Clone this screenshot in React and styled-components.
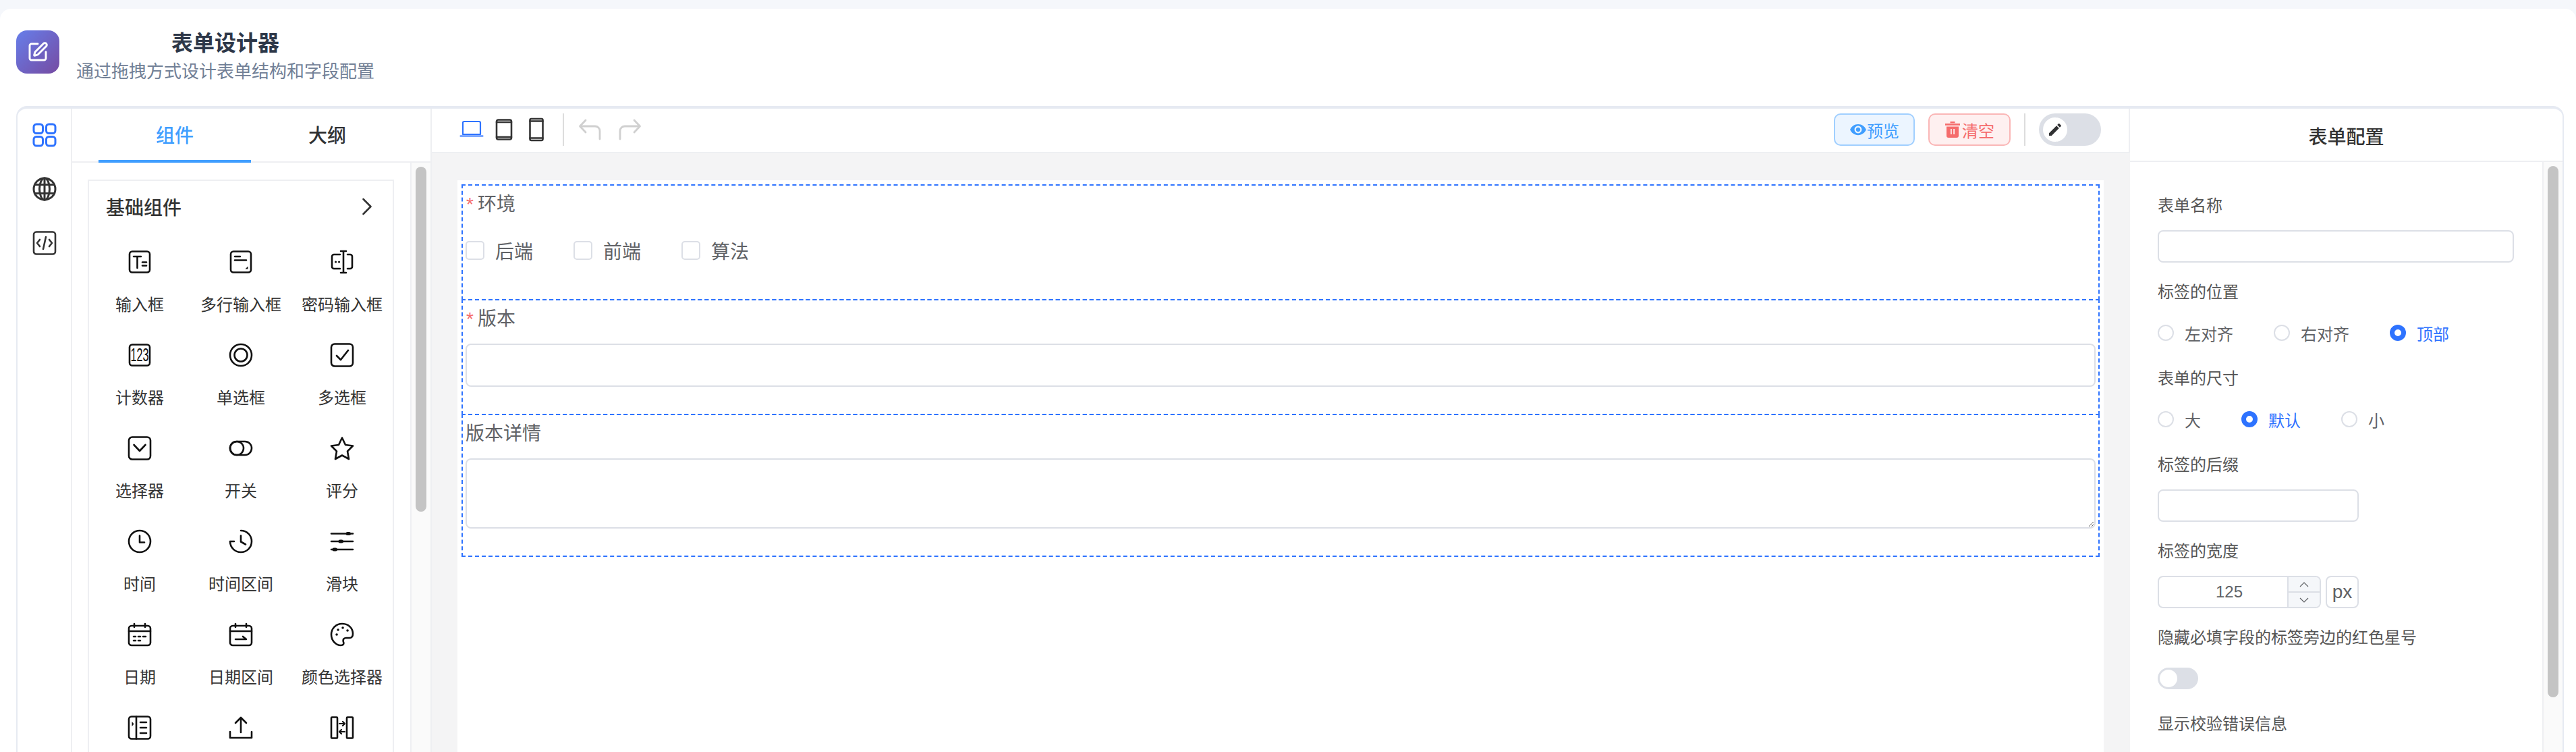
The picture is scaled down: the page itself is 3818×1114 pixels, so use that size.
import React from 'react';
import styled, { createGlobalStyle } from 'styled-components';
import { SquarePen } from 'lucide-react';
import { MdVisibility, MdEdit } from 'react-icons/md';

const blue = '#2e73ff';
const line = '#eeeff2';
const inputLine = '#dcdfe6';

const GlobalStyle = createGlobalStyle`
  html, body {
    margin: 0;
    height: 100%;
    background: #f5f7fb;
    font-family: "Liberation Sans", "Noto Sans CJK SC", sans-serif;
  }
  #root { height: 100%; }
  * { box-sizing: border-box; }
`;

const Page = styled.div`
  height: 1114px;
  overflow: hidden;
  padding-top: 13px;
`;

const Sheet = styled.div`
  height: 100%;
  background: #fff;
  border-radius: 16px 16px 0 0;
  display: flex;
  flex-direction: column;
`;

const Header = styled.header`
  height: 144px;
  flex: none;
  padding: 32px 24px 0;
  display: flex;
  gap: 25px;
`;

const Logo = styled.div`
  width: 64px;
  height: 64px;
  border-radius: 16px;
  background: linear-gradient(135deg, #667eea, #764ba2);
  color: #fff;
  display: flex;
  align-items: center;
  justify-content: center;
`;

const HeaderText = styled.div`
  text-align: center;
`;

const Title = styled.h1`
  margin: 0;
  font-size: 32px;
  line-height: 38px;
  font-weight: 700;
  color: #2d3748;
`;

const Subtitle = styled.p`
  margin: 5px 0 0;
  font-size: 26px;
  line-height: 36px;
  color: #718096;
`;

const Designer = styled.div`
  flex: 1;
  min-height: 0;
  margin: 0 18px 0 24px;
  border: 2px solid #e6eaf2;
  border-top-width: 4px;
  border-bottom: 0;
  border-radius: 16px 16px 0 0;
  display: flex;
`;

const Rail = styled.nav`
  width: 81px;
  flex: none;
  border-right: 2px solid ${line};
  padding-top: 21px;
  display: flex;
  flex-direction: column;
  align-items: center;
  gap: 44px;
`;

const Palette = styled.aside`
  width: 533px;
  flex: none;
  display: flex;
  flex-direction: column;
  border-right: 2px solid ${line};
`;

const TabBar = styled.div`
  height: 80px;
  flex: none;
  padding-left: 39px;
  display: flex;
  border-bottom: 2px solid ${line};
`;

const Tab = styled.div`
  width: 226px;
  height: 80px;
  border-bottom: 4px solid ${p => (p.$active ? '#409eff' : 'transparent')};
  color: ${p => (p.$active ? '#409eff' : '#303133')};
  font-size: 28px;
  font-weight: 500;
  display: flex;
  align-items: center;
  justify-content: center;
`;

const ScrollPane = styled.div`
  flex: 1;
  min-height: 0;
  display: flex;
  overflow: hidden;
`;

const PaletteBody = styled.div`
  flex: 1;
  padding: 25px 24px 0 23px;
`;

const Track = styled.div`
  width: 30px;
  flex: none;
  border-left: 2px solid ${line};
  background: #fafafa;
  padding: 6px 6px 0;
`;

const Thumb = styled.div`
  width: 16px;
  height: ${p => p.$height}px;
  border-radius: 8px;
  background: #c4c4c4;
`;

const Group = styled.section`
  border: 2px solid ${line};
`;

const GroupHead = styled.div`
  height: 78px;
  padding: 0 30px 2px 25px;
  display: flex;
  align-items: center;
  justify-content: space-between;
  font-size: 28px;
  font-weight: 500;
  color: #333;
`;

const WidgetGrid = styled.div`
  display: grid;
  grid-template-columns: repeat(3, 150px);
`;

const Widget = styled.div`
  height: 138px;
  padding-top: 24px;
  display: flex;
  flex-direction: column;
  align-items: center;
  color: #111;
`;

const WidgetName = styled.span`
  margin-top: 27px;
  font-size: 24px;
  line-height: 37px;
  color: #333;
  white-space: nowrap;
`;

const Center = styled.main`
  flex: 1;
  min-width: 0;
  display: flex;
  flex-direction: column;
`;

const Toolbar = styled.div`
  height: 66px;
  flex: none;
  padding: 0 41px 2px 41px;
  display: flex;
  align-items: center;
  border-bottom: 2px solid ${line};
  border-right: 2px solid ${line};
`;

const ToolGroup = styled.div`
  display: flex;
  align-items: center;
  gap: ${p => p.$gap}px;
`;

const ToolIcon = styled.div`
  width: 36px;
  height: 36px;
  color: ${p => p.$color};
`;

const VDivider = styled.div`
  width: 2px;
  height: 48px;
  background: #dddddd;
  margin: ${p => p.$margin};
`;

const ActionButton = styled.div`
  height: 48px;
  padding: 0 ${p => (p.$danger ? 22 : 21)}px;
  border-radius: 10px;
  border: 2px solid ${p => (p.$danger ? '#fab6b6' : '#a0cfff')};
  background: ${p => (p.$danger ? '#fef0f0' : '#ecf5ff')};
  color: ${p => (p.$danger ? '#f56c6c' : '#409eff')};
  font-size: 24px;
  display: flex;
  align-items: center;
  gap: ${p => (p.$danger ? 2 : 0)}px;
  margin-left: ${p => p.$left}px;
`;

const ModeSwitch = styled.div`
  width: 92px;
  height: 48px;
  border-radius: 24px;
  background: #dcdfe6;
  padding: 6px;
`;

const ModeKnob = styled.div`
  width: 36px;
  height: 36px;
  border-radius: 50%;
  background: #fff;
  color: #303133;
  display: flex;
  align-items: center;
  justify-content: center;
`;

const Spacer = styled.div`
  flex: 1;
`;

const Canvas = styled.div`
  flex: 1;
  min-height: 0;
  background: #f4f4f5;
  padding: 40px 39px 0 38px;
  display: flex;
`;

const FormSheet = styled.div`
  flex: 1;
  background: #fff;
  padding: 6px;
`;

const Field = styled.div`
  border: 2px dashed ${blue};
  padding: 4px 4px 40px;
  & + & { margin-top: -2px; }
`;

const FieldLabel = styled.div`
  height: 44px;
  margin-bottom: 16px;
  font-size: 28px;
  line-height: 47px;
  color: #606266;
  display: flex;
`;

const Star = styled.span`
  width: 11px;
  margin-left: 1px;
  margin-right: 6px;
  color: #f56c6c;
`;

const CheckRow = styled.div`
  height: 64px;
  display: flex;
  align-items: center;
  gap: 60px;
`;

const CheckItem = styled.label`
  display: flex;
  align-items: center;
  gap: 16px;
  font-size: 28px;
  color: #606266;
`;

const CheckBox = styled.span`
  width: 28px;
  height: 28px;
  border: 2px solid ${inputLine};
  border-radius: 5px;
  background: #fff;
`;

const TextInput = styled.input`
  display: block;
  width: ${p => p.$width || '100%'};
  height: ${p => p.$height}px;
  border: 2px solid ${inputLine};
  border-radius: 8px;
  background: #fff;
  outline: none;
`;

const TextArea = styled.textarea`
  display: block;
  width: 100%;
  height: 104px;
  border: 2px solid ${inputLine};
  border-radius: 8px;
  background: #fff;
  outline: none;
  resize: vertical;
`;

const Config = styled.aside`
  width: 641px;
  flex: none;
  display: flex;
  flex-direction: column;
`;

const ConfigHead = styled.div`
  height: 79px;
  flex: none;
  padding-top: 2px;
  border-bottom: 2px solid ${line};
  display: flex;
  align-items: center;
  justify-content: center;
  font-size: 28px;
  font-weight: 500;
  color: #333;
`;

const ConfigBody = styled.div`
  flex: 1;
  padding: 41px 0 0 41px;
`;

const ConfigItem = styled.div`
  margin-bottom: 20px;
`;

const ConfigLabel = styled.div`
  height: 44px;
  margin-bottom: 16px;
  font-size: 24px;
  line-height: 47px;
  color: #555;
`;

const RadioRow = styled.div`
  height: 48px;
  display: flex;
  align-items: center;
  gap: 60px;
`;

const RadioItem = styled.div`
  display: flex;
  align-items: center;
  gap: 16px;
  font-size: 24px;
  color: ${p => (p.$on ? blue : '#606266')};
`;

const RadioDot = styled.span`
  width: 24px;
  height: 24px;
  border-radius: 50%;
  border: ${p => (p.$on ? `7px solid ${blue}` : `2px solid ${inputLine}`)};
  background: #fff;
`;

const NumberRow = styled.div`
  height: 48px;
  display: flex;
  gap: 7px;
`;

const NumberBox = styled.div`
  width: 242px;
  border: 2px solid ${inputLine};
  border-radius: 8px;
  display: flex;
  overflow: hidden;
`;

const NumberValue = styled.div`
  flex: 1;
  padding-left: 18px;
  font-size: 24px;
  color: #606266;
  display: flex;
  align-items: center;
  justify-content: center;
`;

const Stepper = styled.div`
  width: 48px;
  border-left: 2px solid ${inputLine};
  background: #f5f7fa;
  display: flex;
  flex-direction: column;
`;

const StepButton = styled.div`
  flex: 1;
  color: #606266;
  display: flex;
  align-items: center;
  justify-content: center;
  & + & { border-top: 2px solid ${inputLine}; }
`;

const UnitBox = styled.div`
  width: 49px;
  border: 2px solid ${inputLine};
  border-radius: 8px;
  font-size: 28px;
  color: #606266;
  display: flex;
  align-items: center;
  justify-content: center;
`;

const Toggle = styled.div`
  width: 60px;
  height: 32px;
  border-radius: 16px;
  background: #dcdfe6;
  padding: 3px;
`;

const ToggleKnob = styled.div`
  width: 26px;
  height: 26px;
  border-radius: 50%;
  background: #fff;
`;

// all the drawn icons share a 36 box, outlined unless they say otherwise
const Glyph = ({ children, size = 36, sw = 2.6 }) => (
  <svg width={size} height={size} viewBox="0 0 36 36" fill="none" stroke="currentColor" strokeWidth={sw} strokeLinecap="round" strokeLinejoin="round">
    {children}
  </svg>
);

const widgetIcons = {
  input: <><rect x="3" y="2.5" width="30" height="31" rx="4" /><path d="M9 10h11M14.5 10v17M22 18.5h6M22 23.5h6" /></>,
  textarea: <><rect x="3" y="2.5" width="30" height="31" rx="4" /><path d="M9 10h8M9 15.500h17" /><path d="M28.500 24.500v4h-4z" fill="currentColor" stroke="none" /></>,
  password: <><path d="M15 7H6a3 3 0 0 0-3 3v15a3 3 0 0 0 3 3h9M26 7h4a3 3 0 0 1 3 3v15a3 3 0 0 1-3 3h-4M20 2v32M16 2h8M16 34h8" /><path d="M8.500 18h.1M13.500 18h.1" strokeWidth="3" /></>,
  number: <><rect x="3" y="2.5" width="30" height="31" rx="4" /><text transform="scale(0.6 1)" x="30" y="27.500" textAnchor="middle" fontSize="27" fontFamily="Liberation Sans" fill="currentColor" stroke="none">123</text></>,
  radio: <><circle cx="18" cy="18" r="16" /><circle cx="18" cy="18" r="9.500" /></>,
  checkbox: <><rect x="2" y="1.500" width="32" height="33" rx="5" /><path d="M10 19l6 6 11-14" /></>,
  select: <><rect x="2" y="1.500" width="32" height="33" rx="5" /><path d="M9.500 13L18 22l8.500-9" /></>,
  toggle: <><rect x="2" y="8" width="32" height="20" rx="10" /><circle cx="12" cy="18" r="10" /></>,
  star: <path d="M18 2.500l5 10.500 11 1.500-8 8 2 11.500-10-5.500-10 5.500 2-11.500-8-8 11-1.500z" />,
  time: <><circle cx="18" cy="18" r="16" /><path d="M18 9.500v10h7" /></>,
  timerange: <><path d="M18 2a16 16 0 1 1-16 16h6" /><path d="M18 9.500v9l7 4" /></>,
  slider: <><path d="M2 6.500h32M2 18h32M2 30h32" /><path d="M26 6.500h2.500M15 18h2.500M6 30h2.500" strokeWidth="5" /></>,
  date: <><rect x="2" y="5" width="32" height="29" rx="4" /><path d="M2 13h32M10 2v5M26 2v5M9 21h3M16 21h3M23 21h4M9 27h3M16 27h3" /></>,
  daterange: <><rect x="2" y="5" width="32" height="29" rx="4" /><path d="M2 13h32M10 2v5M26 2v5M10 25h16l-5-4" /></>,
  color: <><path d="M18 2C9 2 2 9 2 18s7 16 14 16c4 0 5-2.500 4-5-1-3 0-6 4-6h5c3 0 5-2 5-6C34 8 27 2 18 2z" /><path d="M10 18h.1M12 11h.1M19 8h.1M26 12h.1" strokeWidth="3.500" /></>,
  layout: <><rect x="2" y="1.500" width="32" height="33" rx="4" /><path d="M13 1.500v33M19 10h9M19 18h9M19 26h9" /><path d="M6.500 9l3 3.500-3 3.500z" fill="currentColor" stroke="none" /></>,
  upload: <path d="M18 25V3M10 11l8-8 8 8M2 24v9h32v-9" />,
  transfer: <><rect x="2" y="2.500" width="9" height="31" rx="1" /><rect x="25" y="2.500" width="9" height="31" rx="1" /><path d="M14 12h8M19 9l3 3-3 3M22 24h-8M17 21l-3 3 3 3" strokeWidth="2.2" /></>,
};

// the last row's names fall below the window in the picture
const widgets = [
  ['input', '输入框'], ['textarea', '多行输入框'], ['password', '密码输入框'],
  ['number', '计数器'], ['radio', '单选框'], ['checkbox', '多选框'],
  ['select', '选择器'], ['toggle', '开关'], ['star', '评分'],
  ['time', '时间'], ['timerange', '时间区间'], ['slider', '滑块'],
  ['date', '日期'], ['daterange', '日期区间'], ['color', '颜色选择器'],
  ['layout'], ['upload'], ['transfer'],
];

const RadioGroup = ({ options, value }) => (
  <RadioRow>
    {options.map(option => (
      <RadioItem key={option} $on={option === value}>
        <RadioDot $on={option === value} />
        {option}
      </RadioItem>
    ))}
  </RadioRow>
);

const TrashIcon = () => (
  <svg width="24" height="24" viewBox="0 0 24 24" fill="currentColor">
    <path d="M8.500 0h7v2.200h-7zM1 3h22v2.800H1z" />
    <path fillRule="evenodd" d="M3 7.500h18V21a3 3 0 0 1-3 3H6a3 3 0 0 1-3-3zM9 11v8h1.800v-8zM13.200 11v8H15v-8z" />
  </svg>
);

const App = () => (
  <Page>
    <GlobalStyle />
    <Sheet>
      <Header>
        <Logo><SquarePen size={32} strokeWidth={2.2} /></Logo>
        <HeaderText>
          <Title>表单设计器</Title>
          <Subtitle>通过拖拽方式设计表单结构和字段配置</Subtitle>
        </HeaderText>
      </Header>

      <Designer>
        <Rail>
          <ToolIcon $color={blue}>
            <Glyph sw={3}>
              <rect x="2" y="2" width="13.500" height="13.500" rx="4" />
              <rect x="20.500" y="2" width="13.500" height="13.500" rx="4" />
              <rect x="2" y="20.500" width="13.500" height="13.500" rx="4" />
              <rect x="20.500" y="20.500" width="13.500" height="13.500" rx="4" />
            </Glyph>
          </ToolIcon>
          <ToolIcon $color="#333">
            <Glyph sw={3}>
              <circle cx="18" cy="18" r="16" />
              <ellipse cx="18" cy="18" rx="7.500" ry="16" />
              <path d="M18 2v32M3.500 11.500h29M3.500 24.500h29" />
            </Glyph>
          </ToolIcon>
          <ToolIcon $color="#333">
            <Glyph sw={2.6}>
              <rect x="2" y="1.500" width="32" height="33" rx="4" />
              <path d="M11 13l-4 5 4 5M25 13l4 5-4 5M20 9l-4 18" />
            </Glyph>
          </ToolIcon>
        </Rail>

        <Palette>
          <TabBar>
            <Tab $active>组件</Tab>
            <Tab>大纲</Tab>
          </TabBar>
          <ScrollPane>
            <PaletteBody>
              <Group>
                <GroupHead>
                  基础组件
                  <svg width="16" height="26" viewBox="0 0 16 26" fill="none" stroke="#333" strokeWidth="2.6" strokeLinecap="round" strokeLinejoin="round"><path d="M2.500 2l11 11-11 11" /></svg>
                </GroupHead>
                <WidgetGrid>
                  {widgets.map(([icon, name]) => (
                    <Widget key={icon}>
                      <Glyph>{widgetIcons[icon]}</Glyph>
                      {name && <WidgetName>{name}</WidgetName>}
                    </Widget>
                  ))}
                </WidgetGrid>
              </Group>
            </PaletteBody>
            <Track><Thumb $height={511} /></Track>
          </ScrollPane>
        </Palette>

        <Center>
          <Toolbar>
            <ToolGroup $gap={12}>
              <ToolIcon $color={blue}>
                <Glyph sw={2.2}><path d="M5 8a2 2 0 0 1 2-2h22a2 2 0 0 1 2 2v17H5zM1.500 27.500h33" /></Glyph>
              </ToolIcon>
              <ToolIcon $color="#333">
                <Glyph sw={2.6}><rect x="7" y="3.500" width="22" height="29" rx="2.500" /><path d="M7 7h22M7 29h22" /></Glyph>
              </ToolIcon>
              <ToolIcon $color="#333">
                <Glyph sw={2.6}><rect x="8.500" y="2" width="19" height="32" rx="2" /><path d="M8.500 5.500h19M8.500 30.500h19" /></Glyph>
              </ToolIcon>
            </ToolGroup>
            <VDivider $margin="0 20px 0 21px" />
            <ToolGroup $gap={24}>
              <ToolIcon $color="#d0d0d0">
                <Glyph sw={2.8}><path d="M33 32V20a7 7 0 0 0-7-7H4M12 4L3.500 13l8.500 9" /></Glyph>
              </ToolIcon>
              <ToolIcon $color="#d0d0d0">
                <Glyph sw={2.8}><path d="M3 32V20a7 7 0 0 1 7-7h22M24 4l8.500 9-8.500 9" /></Glyph>
              </ToolIcon>
            </ToolGroup>
            <Spacer />
            <ActionButton $left={0}><MdVisibility size={26} />预览</ActionButton>
            <ActionButton $danger $left={20}><TrashIcon />清空</ActionButton>
            <VDivider $margin="0 20px" />
            <ModeSwitch>
              <ModeKnob><MdEdit size={24} /></ModeKnob>
            </ModeSwitch>
          </Toolbar>

          <Canvas>
            <FormSheet>
              <Field>
                <FieldLabel><Star>*</Star>环境</FieldLabel>
                <CheckRow>
                  {['后端', '前端', '算法'].map(option => (
                    <CheckItem key={option}><CheckBox />{option}</CheckItem>
                  ))}
                </CheckRow>
              </Field>
              <Field>
                <FieldLabel><Star>*</Star>版本</FieldLabel>
                <TextInput $height={64} />
              </Field>
              <Field>
                <FieldLabel>版本详情</FieldLabel>
                <TextArea />
              </Field>
            </FormSheet>
          </Canvas>
        </Center>

        <Config>
          <ConfigHead>表单配置</ConfigHead>
          <ScrollPane>
            <ConfigBody>
              <ConfigItem>
                <ConfigLabel>表单名称</ConfigLabel>
                <TextInput $height={48} $width="528px" />
              </ConfigItem>
              <ConfigItem>
                <ConfigLabel>标签的位置</ConfigLabel>
                <RadioGroup options={['左对齐', '右对齐', '顶部']} value="顶部" />
              </ConfigItem>
              <ConfigItem>
                <ConfigLabel>表单的尺寸</ConfigLabel>
                <RadioGroup options={['大', '默认', '小']} value="默认" />
              </ConfigItem>
              <ConfigItem>
                <ConfigLabel>标签的后缀</ConfigLabel>
                <TextInput $height={48} $width="298px" />
              </ConfigItem>
              <ConfigItem>
                <ConfigLabel>标签的宽度</ConfigLabel>
                <NumberRow>
                  <NumberBox>
                    <NumberValue>125</NumberValue>
                    <Stepper>
                      <StepButton><svg width="14" height="8" viewBox="0 0 14 8" fill="none" stroke="currentColor" strokeWidth="1.200"><path d="M1 7l6-6 6 6" /></svg></StepButton>
                      <StepButton><svg width="14" height="8" viewBox="0 0 14 8" fill="none" stroke="currentColor" strokeWidth="1.200"><path d="M1 1l6 6 6-6" /></svg></StepButton>
                    </Stepper>
                  </NumberBox>
                  <UnitBox>px</UnitBox>
                </NumberRow>
              </ConfigItem>
              <ConfigItem>
                <ConfigLabel>隐藏必填字段的标签旁边的红色星号</ConfigLabel>
                <RadioRow>
                  <Toggle><ToggleKnob /></Toggle>
                </RadioRow>
              </ConfigItem>
              <ConfigItem>
                <ConfigLabel>显示校验错误信息</ConfigLabel>
              </ConfigItem>
            </ConfigBody>
            <Track><Thumb $height={787} /></Track>
          </ScrollPane>
        </Config>
      </Designer>
    </Sheet>
  </Page>
);

export default App;
